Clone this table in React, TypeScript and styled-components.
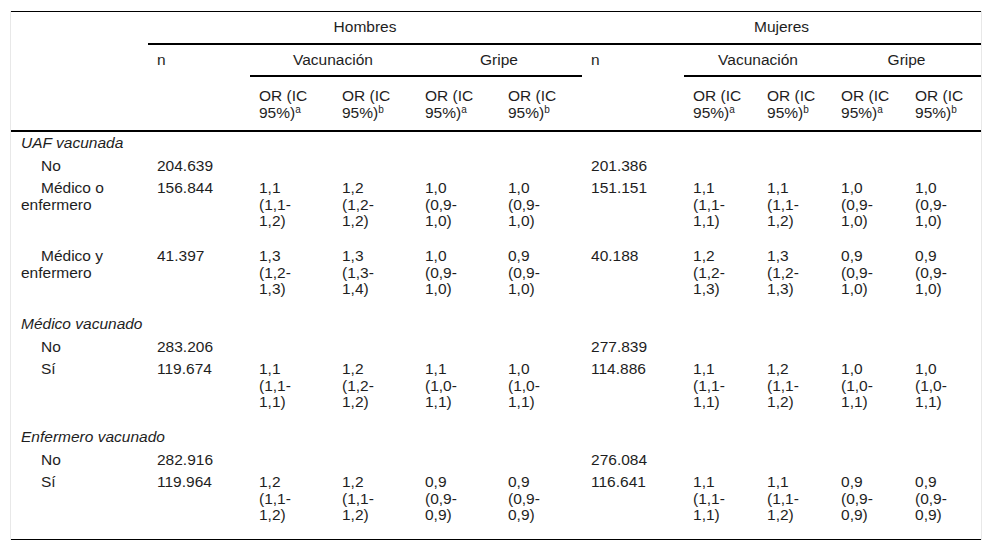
import { Fragment } from 'react';
import styled, { createGlobalStyle } from 'styled-components';

type Group = {
    title: string,
    rows: {
        label: string,
        men: { n: string, ors?: string[] },
        women: { n: string, ors?: string[] },
    }[]
}

const groups: Group[] = [
    {
        title: 'UAF vacunada',
        rows: [
            { label: 'No', men: { n: '204.639' }, women: { n: '201.386' } },
            {
                label: 'Médico o enfermero',
                men: { n: '156.844', ors: ['1,1 (1,1-1,2)', '1,2 (1,2-1,2)', '1,0 (0,9-1,0)', '1,0 (0,9-1,0)'] },
                women: { n: '151.151', ors: ['1,1 (1,1-1,1)', '1,1 (1,1-1,2)', '1,0 (0,9-1,0)', '1,0 (0,9-1,0)'] },
            },
            {
                label: 'Médico y enfermero',
                men: { n: '41.397', ors: ['1,3 (1,2-1,3)', '1,3 (1,3-1,4)', '1,0 (0,9-1,0)', '0,9 (0,9-1,0)'] },
                women: { n: '40.188', ors: ['1,2 (1,2-1,3)', '1,3 (1,2-1,3)', '0,9 (0,9-1,0)', '0,9 (0,9-1,0)'] },
            },
        ],
    },
    {
        title: 'Médico vacunado',
        rows: [
            { label: 'No', men: { n: '283.206' }, women: { n: '277.839' } },
            {
                label: 'Sí',
                men: { n: '119.674', ors: ['1,1 (1,1-1,1)', '1,2 (1,2-1,2)', '1,1 (1,0-1,1)', '1,0 (1,0-1,1)'] },
                women: { n: '114.886', ors: ['1,1 (1,1-1,1)', '1,2 (1,1-1,2)', '1,0 (1,0-1,1)', '1,0 (1,0-1,1)'] },
            },
        ],
    },
    {
        title: 'Enfermero vacunado',
        rows: [
            { label: 'No', men: { n: '282.916' }, women: { n: '276.084' } },
            {
                label: 'Sí',
                men: { n: '119.964', ors: ['1,2 (1,1-1,2)', '1,2 (1,1-1,2)', '0,9 (0,9-0,9)', '0,9 (0,9-0,9)'] },
                women: { n: '116.641', ors: ['1,1 (1,1-1,1)', '1,1 (1,1-1,2)', '0,9 (0,9-0,9)', '0,9 (0,9-0,9)'] },
            },
        ],
    },
];

const colWidths = [137, 102, 83, 83, 83, 83, 102, 74, 74, 74, 75];
const notes = ['a', 'b', 'a', 'b'];

export default function App() {
    return (
        <Page>
            <GlobalStyle />
            <Frame>
                <Table>
                    <colgroup>
                        {colWidths.map((w, i) => <col key={i} style={{ width: w }} />)}
                    </colgroup>
                    <thead>
                        <tr>
                            <HeadCell rowSpan={3} $rule />
                            <HeadCell colSpan={5} $align="center" $rule>Hombres</HeadCell>
                            <HeadCell colSpan={5} $align="center" $rule>Mujeres</HeadCell>
                        </tr>
                        <tr>
                            <HeadCell rowSpan={2} $rule>n</HeadCell>
                            <HeadCell colSpan={2} $align="center" $rule>Vacunación</HeadCell>
                            <HeadCell colSpan={2} $align="center" $rule>Gripe</HeadCell>
                            <HeadCell rowSpan={2} $rule>n</HeadCell>
                            <HeadCell colSpan={2} $align="center" $rule>Vacunación</HeadCell>
                            <HeadCell colSpan={2} $align="center" $rule>Gripe</HeadCell>
                        </tr>
                        <tr>
                            {[...notes, ...notes].map((s, i) => (
                                <OrHead key={i} $rule>OR (IC 95%)<Sup>{s}</Sup></OrHead>
                            ))}
                        </tr>
                    </thead>
                    <tbody>
                        {groups.map((g) => (
                            <Fragment key={g.title}>
                                <tr>
                                    <GroupCell colSpan={11}>{g.title}</GroupCell>
                                </tr>
                                {g.rows.map((r) => (
                                    <tr key={r.label}>
                                        <LabelCell>{r.label}</LabelCell>
                                        <Cell>{r.men.n}</Cell>
                                        {[0, 1, 2, 3].map((i) => <Cell key={'m' + i}><Ratio value={r.men.ors?.[i]} /></Cell>)}
                                        <Cell>{r.women.n}</Cell>
                                        {[0, 1, 2, 3].map((i) => <Cell key={'w' + i}><Ratio value={r.women.ors?.[i]} /></Cell>)}
                                    </tr>
                                ))}
                            </Fragment>
                        ))}
                    </tbody>
                </Table>
            </Frame>
        </Page>
    )
}

function Ratio(props: { value?: string }) {
    if (!props.value) return null;
    const [or, ci] = props.value.split(' ');
    const [lo, hi] = ci.split('-');
    return (
        <RatioBlock>
            {or}<br />{lo}-<br />{hi}
        </RatioBlock>
    )
}

const GlobalStyle = createGlobalStyle`
  html, body {
    margin: 0;
    background: #fff;
  }
  body {
    font-family: "Liberation Sans", Arial, Helvetica, sans-serif;
  }
`;

const Page = styled.div`
  padding: 11px 10px 0;
`;

const Frame = styled.div`
  width: 972px;
  box-sizing: border-box;
  border-left: 1px solid #e8e8e8;
  border-right: 1px solid #e8e8e8;
`;

const Table = styled.table`
  width: 970px;
  table-layout: fixed;
  border-collapse: collapse;
  border-top: 1px solid #000;
  border-bottom: 1px solid #000;
  font-size: 15.5px;
  line-height: 16.5px;
  color: #1e1e1e;
`;

const HeadCell = styled.th<{ $align?: 'left' | 'center', $rule?: boolean }>`
  font-weight: normal;
  text-align: ${p => p.$align || 'left'};
  vertical-align: top;
  padding: 7px 9px;
  border-bottom: ${p => p.$rule ? '2px solid #000' : 'none'};
`;

const OrHead = styled(HeadCell)`
  padding-top: 11px;
  padding-bottom: 9px;
`;

const Sup = styled.sup`
  font-size: 10px;
  line-height: 0;
  vertical-align: 5px;
`;

const Cell = styled.td`
  vertical-align: top;
  text-align: left;
  padding: 3px 9px;
`;

const RatioBlock = styled.span`
  display: block;
  margin-bottom: 12.5px;
`;

const LabelCell = styled(Cell)`
  padding-left: 10px;
  text-indent: 20px;
`;

const GroupCell = styled(Cell)`
  padding-left: 10px;
  font-style: italic;
`;
